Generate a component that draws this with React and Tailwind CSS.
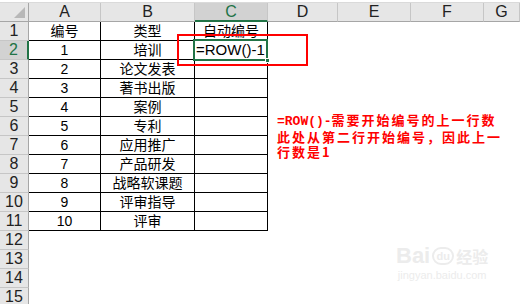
import React from 'react';

const cols = ['A', 'B', 'C', 'D', 'E', 'F', 'G'];
const types = ['类型', '培训', '论文发表', '著书出版', '案例', '专利', '应用推广', '产品研发', '战略软课题', '评审指导', '评审'];

const App = () => {
  const rows = Array.from({ length: 15 }, (_, i) => i + 1);

  return (
    <div
      className="relative w-[520px] h-[304px] overflow-hidden bg-white text-black"
      style={{ fontFamily: '"Liberation Sans", "Noto Sans CJK SC", sans-serif' }}
    >
      <div className="grid grid-cols-[29px_72px_94px_73px_70px_73px_73px_1fr] grid-rows-[3px_19px_repeat(15,19px)]">
        {/* top strip */}
        <div className="col-span-8 bg-white border-b border-[#dadada]"></div>

        {/* corner */}
        <div className="relative bg-[#e6e6e6] border-r border-b border-[#a6a6a6]">
          <div className="absolute right-[3px] bottom-[3px] w-0 h-0 border-l-[11px] border-l-transparent border-b-[11px] border-b-[#b8b8b8]"></div>
        </div>

        {/* column headers */}
        {cols.map((c) => (
          <div
            key={c}
            className={
              c === 'C'
                ? 'flex items-center justify-center bg-[#d2d2d2] border-r border-[#c6c6c6] border-b-2 border-b-[#217346] text-[#217346] text-[16px]'
                : 'flex items-center justify-center bg-[#e6e6e6] border-r border-[#c6c6c6] border-b border-b-[#a6a6a6] text-[#222] text-[16px]'
            }
          >
            {c}
          </div>
        ))}

        {rows.map((r) => {
          const inTable = r <= 11;
          const cell = inTable
            ? 'flex items-center justify-center border-r border-b border-black text-[14px]'
            : 'flex items-center justify-center';
          return (
            <React.Fragment key={r}>
              <div
                className={
                  r === 2
                    ? 'flex items-center justify-center bg-[#d2d2d2] border-b border-[#c6c6c6] border-r-2 border-r-[#217346] text-[#217346] text-[16px]'
                    : 'flex items-center justify-center bg-[#e6e6e6] border-b border-[#c6c6c6] border-r border-r-[#a6a6a6] text-[#222] text-[16px]'
                }
              >
                {r}
              </div>
              <div className={cell}>{inTable ? (r === 1 ? '编号' : r - 1) : ''}</div>
              <div className={cell}>{inTable ? types[r - 1] : ''}</div>
              <div className={cell}>{r === 1 ? '自动编号' : ''}</div>
              <div></div>
              <div></div>
              <div></div>
              <div></div>
            </React.Fragment>
          );
        })}
      </div>

      {/* active cell C2 */}
      <div className="absolute left-[193px] top-[39px] w-[75px] h-[22px] border-2 border-[#217346] flex items-center pl-[1px] text-[15px]">
        =ROW()-1
        <div className="absolute -right-[4px] -bottom-[4px] w-[5px] h-[5px] bg-[#217346] border border-white"></div>
      </div>

      {/* red highlight box */}
      <div className="absolute left-[177px] top-[34px] w-[131px] h-[32px] border-2 border-[#ff0000]"></div>

      {/* note */}
      <p
        className="absolute left-[277px] top-[112px] text-[13px] leading-[15px] font-bold tracking-[2px] text-[#ff0000] whitespace-nowrap"
        style={{ fontFamily: '"Noto Sans CJK SC", sans-serif' }}
      >
        <span className="font-['Liberation_Mono'] text-[13px] tracking-normal">=ROW()-</span>需要开始编号的上一行数
        <br />
        此处从第二行开始编号，因此上一
        <br />
        行数是1
      </p>

      {/* watermark */}
      <div className="absolute left-[396px] top-[245px] flex flex-col items-center gap-[2px] text-[#ececec]">
        <div className="flex items-center gap-[2px] h-[22px] leading-[22px]">
          <span className="text-[22px] font-bold font-['Liberation_Sans']">Bai</span>
          <span className="w-[22px] h-[18px] leading-[14px] rounded-full border-2 border-[#ececec] text-[11px] font-bold flex items-center justify-center">du</span>
          <span className="text-[16px] font-bold leading-[22px]" style={{ fontFamily: '"Noto Sans CJK SC", sans-serif' }}>经验</span>
        </div>
        <div className="text-[11px] font-['Liberation_Sans'] leading-[13px]">jingyan.baidu.com</div>
      </div>
    </div>
  );
};

export default App;
